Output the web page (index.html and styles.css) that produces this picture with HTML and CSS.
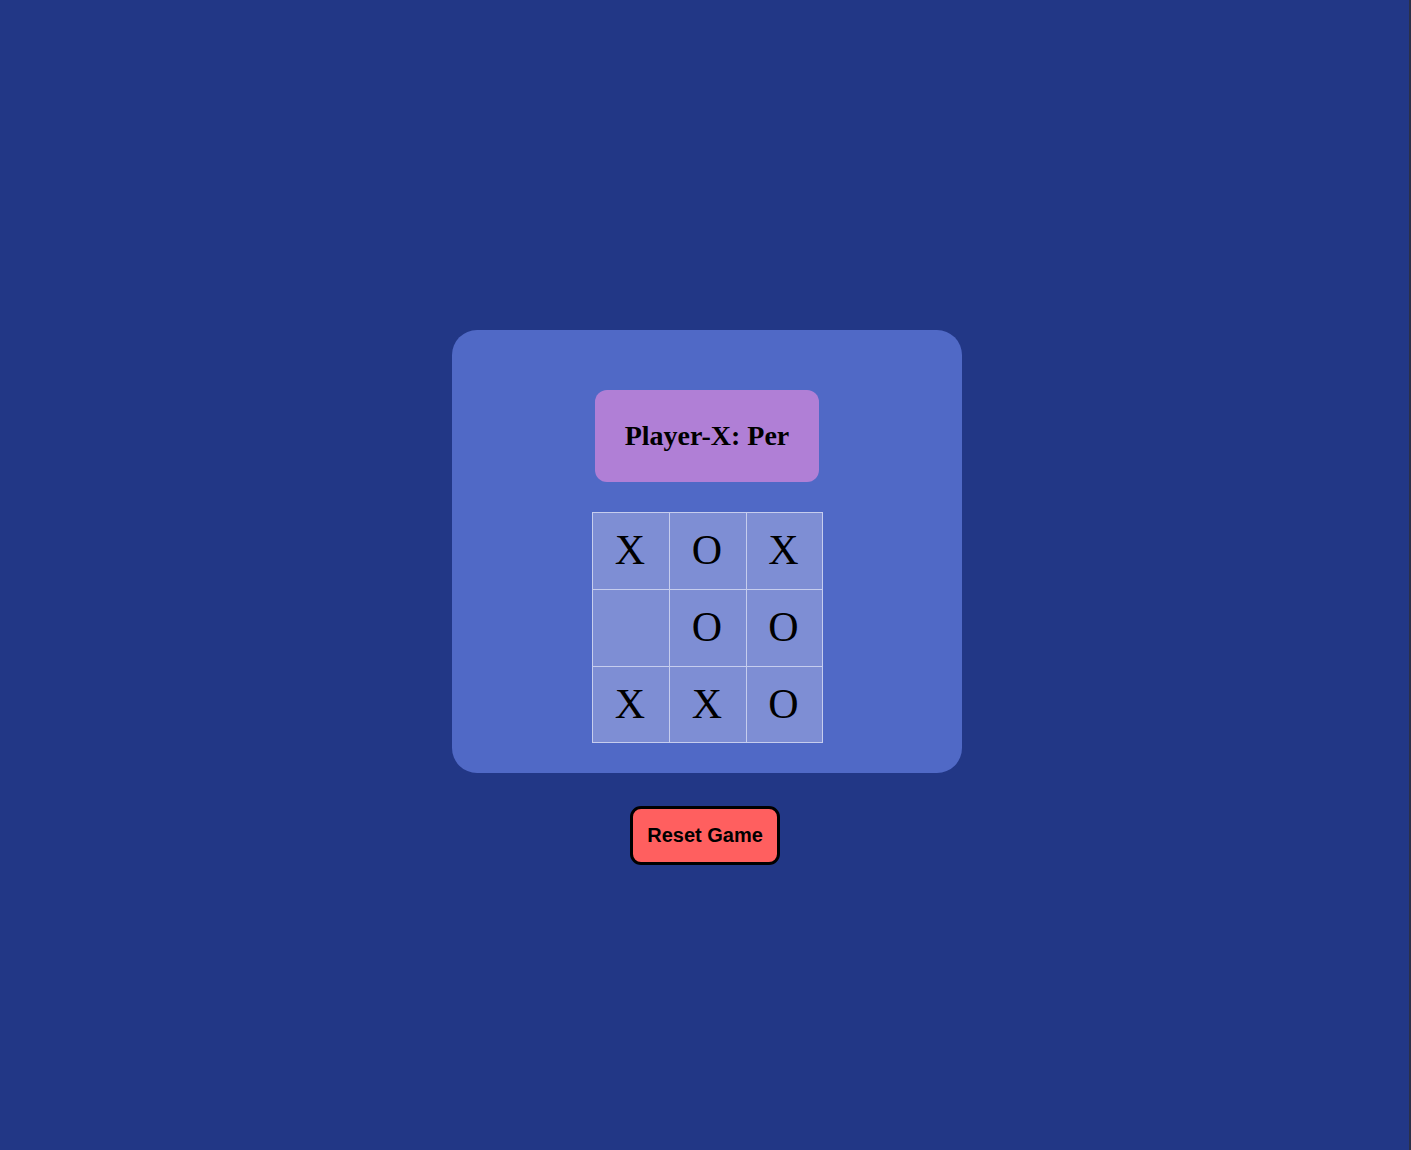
FILE: index.html
```html
<!DOCTYPE html>
<html lang="en">
<head>
<meta charset="utf-8">
<title>Tic Tac Toe</title>
<link rel="stylesheet" href="styles.css">
</head>
<body>
<main class="page">
  <section class="card">
    <div class="status">Player-X: Per</div>
    <div class="board">
      <div class="cell">X</div>
      <div class="cell">O</div>
      <div class="cell">X</div>
      <div class="cell"></div>
      <div class="cell">O</div>
      <div class="cell">O</div>
      <div class="cell">X</div>
      <div class="cell">X</div>
      <div class="cell">O</div>
    </div>
  </section>
  <button class="reset" type="button">Reset Game</button>
</main>
</body>
</html>
```
FILE: styles.css
```css
html, body {
  margin: 0;
  padding: 0;
  background: #223786;
}
.page {
  box-sizing: border-box;
  min-height: 1150px;
  border-right: 2px solid #2b3048;
  display: flex;
  flex-direction: column;
  align-items: center;
  padding-top: 330px;
  font-family: "Liberation Serif", "Times New Roman", serif;
}
.card {
  width: 510px;
  height: 443px;
  box-sizing: border-box;
  background: #5069c6;
  border-radius: 25px;
  padding-top: 60px;
  display: flex;
  flex-direction: column;
  align-items: center;
  margin-left: 5px;
}
.status {
  width: 224px;
  height: 92px;
  box-sizing: border-box;
  background: #b07fd6;
  border-radius: 12px;
  display: flex;
  align-items: center;
  justify-content: center;
  font-weight: bold;
  font-size: 28px;
  color: #000;
}
.board {
  margin-top: 30px;
  margin-left: 1px;
  display: grid;
  grid-template-columns: 77px 77px 76px;
  grid-template-rows: 77px 77px 76px;
  border-left: 1px solid #c6cdee;
  border-top: 1px solid #c6cdee;
}
.cell {
  background: #7e8ed4;
  border-right: 1px solid #c6cdee;
  border-bottom: 1px solid #c6cdee;
  display: flex;
  align-items: center;
  justify-content: center;
  font-size: 42px;
  color: #000;
  padding: 0 2px 2px 0;
}
.reset {
  margin-top: 33px;
  width: 150px;
  height: 59px;
  box-sizing: border-box;
  background: #ff5f5f;
  border: 3px solid #000;
  border-radius: 11px;
  font-family: "Liberation Sans", Arial, sans-serif;
  font-weight: bold;
  font-size: 20px;
  color: #000;
  padding: 0;
  margin-left: 1px;
}
```
